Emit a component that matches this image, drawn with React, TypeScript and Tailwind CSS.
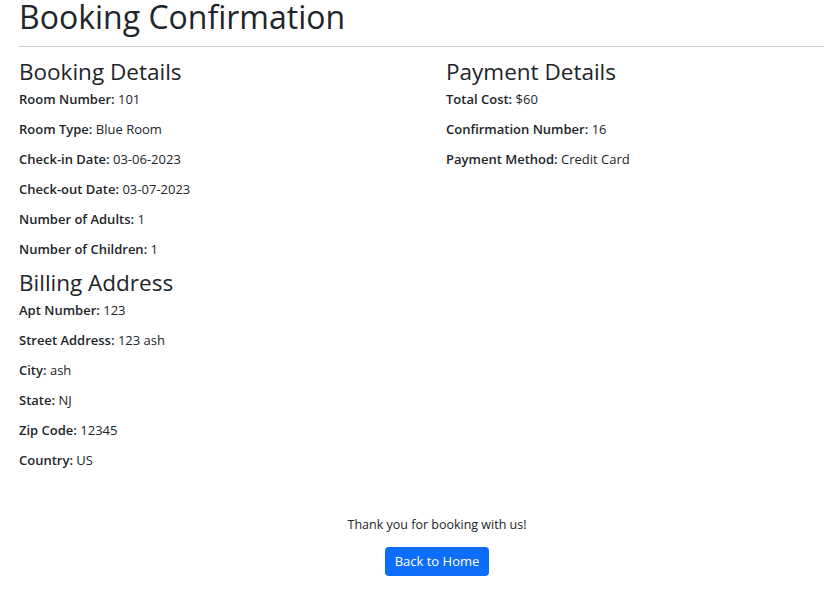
import React from "react";

const Row = ({ label, value }: { label: string; value: string }) => (
  <p className="text-[13px] leading-[20px] text-[#212529]">
    <span className="font-semibold">{label}:</span> {value}
  </p>
);

export default function App() {
  return (
    <div className="w-[824px] h-[596px] bg-white pl-[19px] text-[#212529] overflow-hidden" style={{ fontFamily: '"Open Sans", "Noto Sans", sans-serif' }}>
      <h1 className="text-[32px] leading-[34px] font-normal">Booking Confirmation</h1>
      <hr className="mt-[12px] border-t border-[#c8c9ca]" />
      <div className="grid grid-cols-[427px_1fr]">
        <div>
          <h3 className="mt-[10px] text-[22.5px] leading-[30px] font-normal">Booking Details</h3>
          <div className="mt-[2px] flex flex-col gap-[10px]">
            <Row label="Room Number" value="101" />
            <Row label="Room Type" value="Blue Room" />
            <Row label="Check-in Date" value="03-06-2023" />
            <Row label="Check-out Date" value="03-07-2023" />
            <Row label="Number of Adults" value="1" />
            <Row label="Number of Children" value="1" />
          </div>
          <h3 className="mt-[9px] text-[22.5px] leading-[30px] font-normal">Billing Address</h3>
          <div className="mt-[2px] flex flex-col gap-[10px]">
            <Row label="Apt Number" value="123" />
            <Row label="Street Address" value="123 ash" />
            <Row label="City" value="ash" />
            <Row label="State" value="NJ" />
            <Row label="Zip Code" value="12345" />
            <Row label="Country" value="US" />
          </div>
        </div>
        <div>
          <h3 className="mt-[10px] text-[22.5px] leading-[30px] font-normal">Payment Details</h3>
          <div className="mt-[2px] flex flex-col gap-[10px]">
            <Row label="Total Cost" value="$60" />
            <Row label="Confirmation Number" value="16" />
            <Row label="Payment Method" value="Credit Card" />
          </div>
        </div>
      </div>
      <div className="flex w-[836px] flex-col items-center">
        <p className="mt-[45px] text-[12.5px] leading-[20px]">Thank you for booking with us!</p>
        <button className="mt-[12px] h-[29px] w-[104px] rounded-[4px] bg-[#0d6efd] text-white text-[13px]">Back to Home</button>
      </div>
    </div>
  );
}
